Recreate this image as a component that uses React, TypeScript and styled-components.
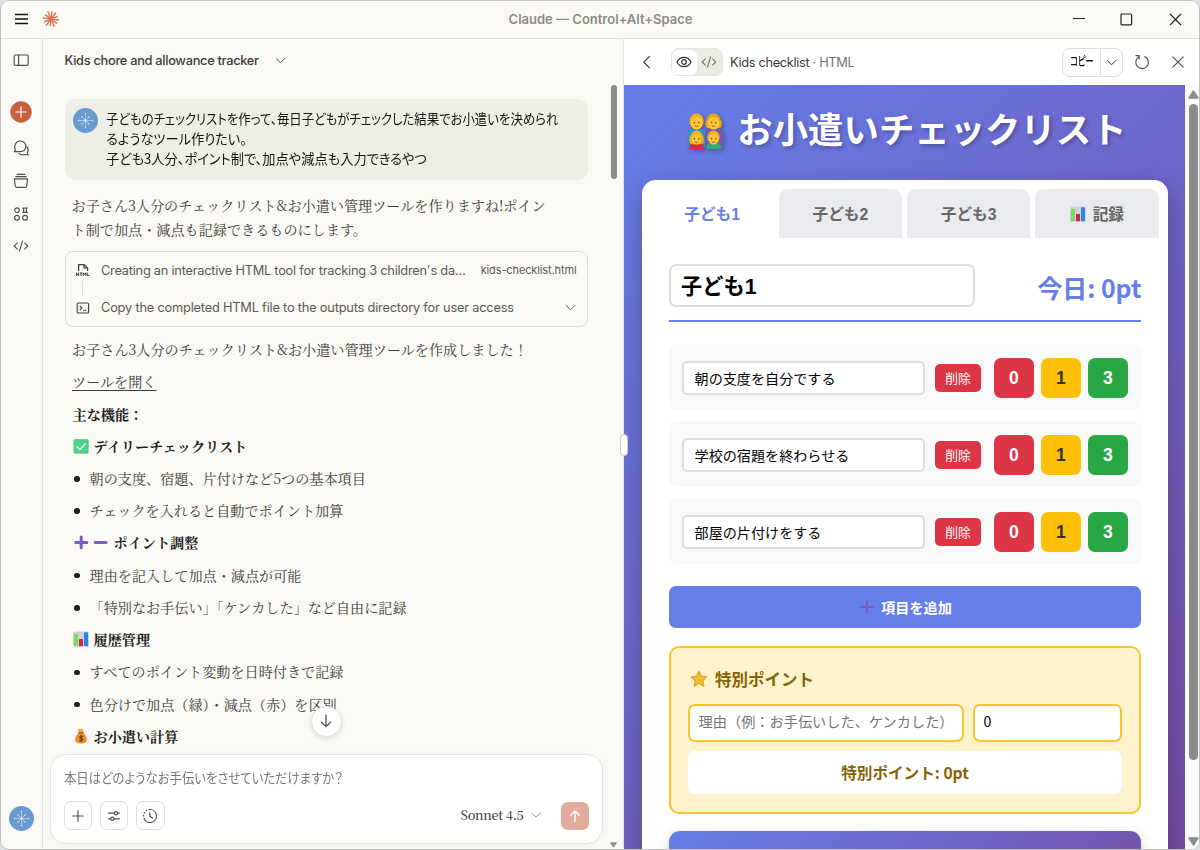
import React from 'react';
import styled, { createGlobalStyle, css } from 'styled-components';

const Global = createGlobalStyle`
  * { box-sizing: border-box; }
  html, body { margin: 0; padding: 0; background: #dfe1ea; }
  button, input { font: inherit; margin: 0; }
  svg { display: block; flex: none; }
`;

const sans = `Inter, "Noto Sans CJK JP", sans-serif`;
const jpSans = `"Noto Sans CJK JP", sans-serif`;
const mixedSans = `"Liberation Sans", "Noto Sans CJK JP", sans-serif`;
const serif = `"Noto Serif CJK JP", "Noto Serif JP", "Noto Sans CJK JP", serif`;

/* ---------- window ---------- */

const Window = styled.div`
  width: 1200px;
  height: 850px;
  display: flex;
  flex-direction: column;
  border: 1px solid #c2c1be;
  border-radius: 9px;
  overflow: hidden;
  background: #faf9f5;
  font-family: ${sans};
  color: #3d3d3a;
`;

const TitleBar = styled.header`
  height: 38px;
  flex: none;
  display: grid;
  grid-template-columns: 1fr auto 1fr;
  align-items: center;
  border-bottom: 1px solid #dfded9;
`;

const TitleLeft = styled.div`
  display: flex;
  align-items: center;
  gap: 13px;
  padding: 0 0 1px 13px;
`;

const TitleText = styled.div`
  padding: 0 0 2px 1px;
  font-size: 13px;
  font-weight: 600;
  color: #8c8b87;
`;

const TitleButtons = styled.div`
  display: flex;
  justify-content: flex-end;
  align-items: center;
  gap: 35.5px;
  padding: 0 17.5px 1px 0;
`;

const Body = styled.div`
  flex: 1;
  min-height: 0;
  display: flex;
`;

const Sidebar = styled.nav`
  width: 42px;
  flex: none;
  display: flex;
  flex-direction: column;
  align-items: center;
  padding: 13px 1px 18px 0;
  border-right: 1px solid #e3e2dd;
`;

const SideItem = styled.div<{ $top: number }>`
  width: 22px;
  height: 16px;
  margin-top: ${(p) => p.$top}px;
  display: flex;
  align-items: center;
  justify-content: center;
`;

const Avatar = styled.div`
  width: 25px;
  height: 25px;
  flex: none;
  border-radius: 50%;
  background: #6899cf;
  display: flex;
  align-items: center;
  justify-content: center;
`;

const Spacer = styled.div`
  flex: 1;
`;

/* ---------- chat ---------- */

const Chat = styled.section`
  width: 581px;
  flex: none;
  display: flex;
  flex-direction: column;
  border-right: 1px solid #e3e2dd;
  position: relative;
`;

const ChatHeader = styled.div`
  height: 43px;
  flex: none;
  display: flex;
  align-items: center;
  gap: 15px;
  padding: 0 0 1px 21.5px;
  font-size: 12.8px;
  font-weight: 500;
  letter-spacing: -0.29px;
`;

const ChatBody = styled.div`
  flex: 1;
  min-height: 0;
  display: flex;
`;

const ChatMain = styled.div`
  width: 560px;
  flex: none;
  display: flex;
  flex-direction: column;
`;

const Messages = styled.div`
  height: 672px;
  flex: none;
  overflow: hidden;
  padding: 17px 15.5px 0 21.5px;
`;

const Bubble = styled.div`
  height: 81px;
  border-radius: 10px;
  background: #efeee6;
  display: flex;
  gap: 8px;
  padding: 9px 8px;
`;

const BubbleLines = styled.div`
  flex: 1;
  min-width: 0;
`;

const BubbleText = styled.p<{ $fit: number }>`
  margin: 0;
  width: max-content;
  font-family: ${jpSans};
  font-size: 14px;
  line-height: 20px;
  color: #141413;
  white-space: nowrap;
  font-feature-settings: 'palt';
  transform: scaleX(${(p) => p.$fit});
  transform-origin: left;
`;

const Line = styled.p`
  margin: 0;
  padding-left: 7px;
  font-family: ${serif};
  font-size: 14.14px;
  line-height: 24px;
  white-space: nowrap;
  color: #3d3d3a;
`;

const Reply = styled.div`
  padding: 12.5px 0 10.5px;
`;

const ToolCard = styled.div`
  height: 76px;
  border: 1px solid #dddcd6;
  border-radius: 8px;
  display: flex;
  flex-direction: column;
  justify-content: space-between;
  padding: 8.5px 10px 9px 10.5px;
`;

const ToolRow = styled.div`
  height: 19px;
  display: flex;
  align-items: center;
  gap: 11px;
  font-size: 12.8px;
  color: #5a5955;
  white-space: nowrap;
`;

const ToolLabel = styled.span<{ $ls: number }>`
  flex: 1;
  min-width: 0;
  letter-spacing: ${(p) => p.$ls}px;
`;

const ToolFile = styled.span`
  font-size: 11px;
  letter-spacing: -0.12px;
`;

const ToolLink = styled.div`
  width: 1px;
  height: 15px;
  margin-left: 6px;
  background: #dddcd6;
`;

const List = styled.div`
  padding-top: 6px;
`;

const Row = styled.div<{ $kind?: 'head' | 'item' | 'link' }>`
  height: 32.23px;
  padding-left: 7.5px;
  display: flex;
  align-items: center;
  gap: 5px;
  font-family: ${serif};
  font-size: 14.14px;
  white-space: nowrap;
  ${(p) =>
    p.$kind === 'head' &&
    css`
      padding-left: 8px;
      font-weight: 700;
      color: #1f1e1d;
    `}
  ${(p) =>
    p.$kind === 'item' &&
    css`
      gap: 10px;
      padding-left: 9.5px;
      &::before {
        content: '';
        width: 5.5px;
        height: 5.5px;
        margin-top: 2px;
        border-radius: 50%;
        background: #1f1e1d;
      }
    `}
  ${(p) =>
    p.$kind === 'link' &&
    css`
      text-decoration: underline;
      text-decoration-thickness: 1px;
      text-underline-offset: 3px;
    `}
`;

const Composer = styled.div`
  width: 553px;
  height: 90px;
  margin-left: 6.5px;
  border: 1px solid #e5e4df;
  border-radius: 16px;
  background: #fff;
  box-shadow: 0 2px 8px rgba(0, 0, 0, 0.03);
  padding: 9.5px 13px 13px;
  display: flex;
  flex-direction: column;
  justify-content: space-between;
`;

const Placeholder = styled.div`
  width: max-content;
  font-family: ${jpSans};
  font-size: 14px;
  line-height: 24px;
  color: #7a7974;
  font-feature-settings: 'palt';
  white-space: nowrap;
  transform: scaleX(0.883);
  transform-origin: left;
`;

const Tools = styled.div`
  display: flex;
  align-items: center;
  gap: 7.5px;
`;

const ToolButton = styled.div`
  width: 28.7px;
  height: 28.7px;
  border: 1px solid #e0dfda;
  border-radius: 7px;
  display: flex;
  align-items: center;
  justify-content: center;
`;

const Model = styled.div`
  margin-left: auto;
  display: flex;
  align-items: center;
  gap: 6px;
  margin-right: 11.5px;
  padding-bottom: 1px;
  font-family: 'Noto Serif CJK JP', 'Liberation Serif', serif;
  font-size: 12.8px;
  font-weight: 500;
  letter-spacing: -0.3px;
  line-height: 20px;
  color: #3d3d3a;
`;

const Send = styled.div`
  width: 28px;
  height: 28px;
  border-radius: 7px;
  background: #e2ab9c;
  display: flex;
  align-items: center;
  justify-content: center;
`;

const ChatScroll = styled.div`
  flex: 1;
  display: flex;
  flex-direction: column;
  justify-content: space-between;
  align-items: center;
  padding: 3px 0 1px 1px;
`;

const ChatThumb = styled.div`
  width: 6px;
  height: 94px;
  border-radius: 3px;
  background: #8d8c89;
`;

const JumpDown = styled.div`
  position: absolute;
  left: 267.5px;
  top: 666.5px;
  width: 31px;
  height: 31px;
  border-radius: 50%;
  background: #fff;
  border: 1px solid #e6e5e0;
  box-shadow: 0 2px 5px rgba(0, 0, 0, 0.12);
  display: flex;
  align-items: center;
  justify-content: center;
`;

const SplitHandle = styled.div`
  position: absolute;
  z-index: 2;
  right: -5px;
  top: 395px;
  width: 8px;
  height: 22px;
  border-radius: 4px;
  background: #fff;
  border: 1px solid #cfcec9;
`;

/* ---------- artifact ---------- */

const Artifact = styled.section`
  flex: 1;
  min-width: 0;
  display: flex;
  flex-direction: column;
  background: #fff;
`;

const ArtifactBar = styled.div`
  height: 46px;
  flex: none;
  display: flex;
  align-items: center;
  padding: 0 13px 0 17px;
`;

const ViewToggle = styled.div`
  width: 52px;
  height: 28px;
  margin: 0 7.5px 0 18.5px;
  border-radius: 8px;
  background: #ecebe3;
  border: 1px solid #e6e5de;
  display: flex;
  align-items: center;
`;

const ViewOption = styled.div<{ $on?: boolean }>`
  width: 25px;
  height: 25px;
  border-radius: 6px;
  background: ${(p) => (p.$on ? '#fff' : 'transparent')};
  display: flex;
  align-items: center;
  justify-content: center;
`;

const ArtifactTitle = styled.div`
  flex: 1;
  font-size: 12.8px;
  letter-spacing: -0.33px;
  white-space: nowrap;
`;

const Muted = styled.span`
  color: #73726c;
`;

const CopyGroup = styled.div`
  width: 61px;
  height: 29px;
  display: flex;
  border: 1px solid #dfdeda;
  border-radius: 8px;
`;

const CopyLabel = styled.div`
  width: 38px;
  flex: none;
  border-right: 1px solid #dfdeda;
  display: flex;
  align-items: center;
  justify-content: center;
`;

const CopyText = styled.span`
  flex: none;
  font-family: ${jpSans};
  font-size: 12.5px;
  font-weight: 500;
  line-height: 24px;
  margin-bottom: 2px;
  color: #141413;
  font-feature-settings: 'palt';
  transform: scaleX(0.66);
  white-space: nowrap;
`;

const CopyMore = styled.div`
  flex: 1;
  display: flex;
  align-items: center;
  justify-content: center;
`;

const BarIcon = styled.div<{ $left: number }>`
  margin-left: ${(p) => p.$left}px;
`;

const Preview = styled.div`
  flex: 1;
  min-height: 0;
  display: flex;
`;

const Page = styled.div`
  width: 561px;
  flex: none;
  overflow: hidden;
  padding: 0 17px 0 18px;
  background: linear-gradient(135deg, #667eea 0%, #764ba2 100%);
  font-family: ${jpSans};
`;

const Heading = styled.h1`
  margin: 0;
  height: 95px;
  padding: 0 0 10px 4px;
  display: flex;
  align-items: center;
  justify-content: center;
  gap: 13px;
  font-size: 35.4px;
  font-weight: 700;
  color: #fff;
  white-space: nowrap;
  text-shadow: 2px 2px 4px rgba(0, 0, 0, 0.28);
`;

const FamilyMark = styled.span`
  margin-top: 8px;
  filter: drop-shadow(2px 2px 2px rgba(0, 0, 0, 0.28));
`;

const Card = styled.div`
  height: 760px;
  border-radius: 14px;
  background: #fff;
  box-shadow: 0 9px 26px rgba(0, 0, 0, 0.25);
  padding-top: 9px;
`;

const Tabs = styled.div`
  display: flex;
  gap: 5px;
  padding: 0 9.5px 0 8.5px;
`;

const Tab = styled.div<{ $on?: boolean }>`
  flex: 1;
  height: 49px;
  border-radius: 9px 9px 0 0;
  background: ${(p) => (p.$on ? '#fff' : '#e9ebee')};
  color: ${(p) => (p.$on ? '#667eea' : '#666')};
  display: flex;
  align-items: center;
  justify-content: center;
  gap: 7px;
  font-family: ${mixedSans};
  font-size: 15.7px;
  font-weight: 700;
`;

const Content = styled.div`
  padding: 26px 26.6px 0 26.6px;
`;

const ChildHeader = styled.div`
  display: flex;
  align-items: center;
  justify-content: space-between;
  padding-bottom: 13px;
  border-bottom: 2.6px solid #667eea;
`;

const NameField = styled.div`
  width: 306.5px;
  height: 42.5px;
  border: 2px solid #ddd;
  border-radius: 7px;
  padding-left: 10.5px;
  font-family: ${mixedSans};
  font-size: 21.2px;
  font-weight: 700;
  line-height: 41px;
  color: #000;
`;

const Today = styled.div`
  font-size: 24.9px;
  font-weight: 700;
  color: #667eea;
  line-height: 30px;
  padding-top: 3px;
`;

const Chores = styled.div`
  padding-top: 22.8px;
  display: flex;
  flex-direction: column;
  gap: 11.8px;
`;

const Chore = styled.div`
  height: 65.3px;
  border-radius: 8px;
  background: #f8f9fa;
  display: flex;
  align-items: center;
  padding: 2px 13.5px 0;
`;

const ChoreField = styled.div`
  width: 243px;
  height: 34.5px;
  border: 2px solid #ddd;
  border-radius: 5px;
  background: #fff;
  padding-left: 10.5px;
  font-size: 14.1px;
  line-height: 30.5px;
  color: #000;
`;

const Delete = styled.div`
  width: 46px;
  height: 28px;
  margin: 0 13px 0 10px;
  border-radius: 5px;
  background: #dc3545;
  color: #fff;
  font-size: 12.8px;
  line-height: 28px;
  text-align: center;
`;

const Scores = styled.div`
  display: flex;
  gap: 7px;
`;

const tones = {
  red: { bg: '#dc3545', fg: '#fff' },
  amber: { bg: '#ffc107', fg: '#333' },
  green: { bg: '#28a745', fg: '#fff' },
};

const Score = styled.div<{ $tone: keyof typeof tones }>`
  width: 40px;
  height: 40px;
  border-radius: 7px;
  background: ${(p) => tones[p.$tone].bg};
  color: ${(p) => tones[p.$tone].fg};
  font-family: ${mixedSans};
  font-size: 17.6px;
  font-weight: 700;
  line-height: 40px;
  text-align: center;
`;

const AddButton = styled.div`
  height: 42px;
  margin-top: 22.2px;
  border-radius: 7px;
  background: #667eea;
  color: #fff;
  font-size: 14.2px;
  font-weight: 700;
  display: flex;
  align-items: center;
  justify-content: center;
  gap: 7px;
  padding-left: 2px;
`;

const Special = styled.div`
  height: 168px;
  margin-top: 17.6px;
  border: 2px solid #fbc42c;
  border-radius: 10px;
  background: #fff3cd;
  padding: 17px 17.5px;
`;

const SpecialTitle = styled.div`
  height: 28px;
  display: flex;
  align-items: center;
  gap: 7px;
  padding-left: 2px;
  font-size: 16.5px;
  font-weight: 700;
  color: #856404;
`;

const SpecialFields = styled.div`
  display: flex;
  gap: 9px;
  margin: 11px 0 9px;
`;

const SpecialField = styled.div<{ $w: number; $dim?: boolean }>`
  width: ${(p) => p.$w}px;
  height: 38px;
  border: 2px solid #fbc42c;
  border-radius: 7px;
  background: #fff;
  padding-left: 8.5px;
  font-size: 14.2px;
  line-height: 31px;
  color: ${(p) => (p.$dim ? '#757575' : '#000')};
  white-space: nowrap;
`;

const SpecialTotal = styled.div`
  height: 43px;
  border-radius: 7px;
  background: #fff;
  color: #856404;
  font-size: 15.6px;
  font-weight: 700;
  line-height: 43px;
  text-align: center;
`;

const Summary = styled.div`
  height: 120px;
  margin-top: 17.8px;
  border-radius: 11px;
  background: linear-gradient(135deg, #667eea 0%, #764ba2 100%);
  box-shadow: 0 4px 14px rgba(0, 0, 0, 0.18);
`;

const PageScroll = styled.div`
  flex: 1;
  display: flex;
  flex-direction: column;
  align-items: center;
  padding: 5px 1px 3px 3px;
  background: #fcfcfc;
`;

const PageThumb = styled.div`
  width: 9px;
  height: 656px;
  margin: 5px 0 auto;
  border-radius: 5px;
  background: #8b8b8b;
`;

/* ---------- drawings ---------- */

type IconProps = { size?: number; w?: number; color?: string };

const Stroke = ({
  size = 16,
  w = 1.2,
  color = '#52514d',
  children,
}: IconProps & { children: React.ReactNode }) => (
  <svg
    width={size}
    height={size}
    viewBox="0 0 16 16"
    fill="none"
    stroke={color}
    strokeWidth={w}
    strokeLinecap="round"
    strokeLinejoin="round"
  >
    {children}
  </svg>
);

const Chevron = ({ size = 16, w = 1.2, color }: IconProps) => (
  <Stroke size={size} w={w} color={color}>
    <path d="M2.8 5.6 L8 10.8 L13.2 5.6" />
  </Stroke>
);

const CodeIcon = ({ color }: IconProps) => (
  <Stroke color={color} w={1.1}>
    <path d="M4.3 4.8 L1.2 8 L4.3 11.2 M11.7 4.8 L14.8 8 L11.7 11.2 M9.6 3 L6.4 13" />
  </Stroke>
);

const Burst = () => {
  const rays = [7.6, 6.9, 7.8, 6.6, 7.7, 7, 7.7, 6.8, 7.8, 7, 7.5, 6.8];
  return (
    <svg width="18" height="18" viewBox="0 0 18 18" stroke="#d97757" strokeWidth="1.5" strokeLinecap="round">
      {rays.map((r, i) => {
        const a = (i * Math.PI) / 6 + 0.12;
        return <line key={i} x1="9" y1="9" x2={9 + r * Math.cos(a)} y2={9 + r * Math.sin(a)} />;
      })}
    </svg>
  );
};

const Snow = () => (
  <svg width="17" height="17" viewBox="0 0 17 17" stroke="#c3d8ee" strokeWidth="0.7" fill="#d3e3f4">
    {[0, 45, 90, 135, 180, 225, 270, 315].map((a, i) => {
      const r = i % 2 ? 5 : 7;
      return (
        <g key={a} transform={`rotate(${a} 8.5 8.5)`}>
          <line x1="8.5" y1="8.5" x2={8.5 + r} y2="8.5" />
          <circle cx={8.5 + r} cy="8.5" r="0.8" stroke="none" />
        </g>
      );
    })}
    <circle cx="8.5" cy="8.5" r="1.4" stroke="none" />
  </svg>
);

const Chart = ({ size = 15 }: IconProps) => (
  <svg width={size} height={size} viewBox="0 0 16 16">
    <rect x="0" y="0.5" width="16" height="15" rx="1.5" fill="#d3d0dc" />
    <rect x="1" y="3" width="4" height="12.3" rx="0.6" fill="#7fd957" />
    <rect x="6" y="8" width="4" height="7.3" rx="0.6" fill="#c7264f" />
    <rect x="11" y="1.2" width="4" height="14.1" rx="0.6" fill="#2b86dc" />
  </svg>
);

const CheckMark = () => (
  <svg width="16" height="16" viewBox="0 0 16 16">
    <rect x="1" y="1.6" width="14.2" height="13.6" rx="1" fill="#4fd08b" stroke="#35b974" strokeWidth="0.6" />
    <path d="M4 8.8 L7 11.6 L12.4 5.6" fill="none" stroke="#fff" strokeWidth="1.4" strokeLinecap="round" />
  </svg>
);

const PlusMinus = () => (
  <svg width="36" height="16" viewBox="0 0 36 16" stroke="#7a5cc4" strokeWidth="3" strokeLinecap="round">
    <path d="M2.6 8.4 H13.8 M8.2 3 V13.8 M22.2 8.4 H33" />
  </svg>
);

const Bag = () => (
  <svg width="16" height="16" viewBox="0 0 16 16">
    <path d="M6 4.6 L4.8 1.6 Q8 0 10.6 1.4 L9.8 4.6 Z" fill="#f3a83b" />
    <path d="M6 4.6 H10 C13 7.2 14.4 10 13.6 13 Q13 15.4 8.2 15.4 Q3 15.4 2.2 13 C1.5 10 3.2 7 6 4.6 Z" fill="#ee8f2a" />
    <rect x="5.2" y="4" width="5.6" height="1.5" rx="0.7" fill="#b55b1b" />
    <path
      d="M10 8.6 Q8 7.2 6.6 8.6 Q6.2 10 8.1 10.3 Q10.4 10.8 9.8 12.2 Q8.2 13.5 6.2 12.2 M8.2 7 V14"
      fill="none"
      stroke="#5f3413"
      strokeWidth="1"
    />
  </svg>
);

const Family = () => {
  const people = [
    { x: 9.6, y: 8.6, r: 6.8, hair: '#f2b01a', long: false },
    { x: 26.6, y: 8.6, r: 6.8, hair: '#f0a010', long: true },
    { x: 9.6, y: 24.6, r: 5.8, hair: '#f2b01a', long: true },
    { x: 26.6, y: 24.6, r: 5.8, hair: '#f0b21a', long: false },
  ];
  return (
    <svg width="37" height="38" viewBox="0 0 37 38">
      <rect x="1" y="16" width="17" height="20" rx="3.5" fill="#2f8fcb" />
      <rect x="18.6" y="16" width="17" height="20" rx="3.5" fill="#7d55b4" />
      <path d="M2.2 36 q0 -7 7.4 -7 q7.4 0 7.4 7 Z" fill="#cf2f3c" />
      <path d="M19.2 36 q0 -7 7.4 -7 q7.4 0 7.4 7 Z" fill="#2fae73" />
      {people.map((p, i) => (
        <g key={i}>
          <ellipse cx={p.x} cy={p.y - 0.4} rx={p.r + 0.3} ry={p.r + 0.9} fill={p.hair} />
          {p.long && <rect x={p.x - p.r - 1.4} y={p.y - 2.4} width={p.r * 2 + 2.8} height="9" rx="3.4" fill={p.hair} />}
          <ellipse cx={p.x} cy={p.y + 1.6} rx={p.r - 1} ry={p.r - 0.4} fill="#ffc935" />
          <circle cx={p.x - 2.2} cy={p.y + 1} r="0.8" fill="#6b451c" />
          <circle cx={p.x + 2.2} cy={p.y + 1} r="0.8" fill="#6b451c" />
          <path d={`M${p.x - 1.8} ${p.y + 4.2} q1.8 1.3 3.6 0`} stroke="#c4462b" strokeWidth="1" fill="none" />
        </g>
      ))}
    </svg>
  );
};

const Star = () => (
  <svg width="18" height="18" viewBox="0 0 18 18">
    <path
      d="M9 1.4 L11.3 6.3 L16.6 7 L12.7 10.7 L13.8 16.2 L9 13.5 L4.2 16.2 L5.3 10.7 L1.4 7 L6.7 6.3 Z"
      fill="#eebf35"
      stroke="#dfac2e"
      strokeWidth="1.4"
      strokeLinejoin="round"
    />
  </svg>
);

const Triangle = ({ down, w = 11, h = 9 }: { down?: boolean; w?: number; h?: number }) => (
  <svg width={w} height={h} viewBox="0 0 11 9">
    <path
      d={down ? 'M1 1 H10 L5.5 8 Z' : 'M1 8 H10 L5.5 1 Z'}
      fill="#8b8b8b"
      stroke="#8b8b8b"
      strokeWidth="1.4"
      strokeLinejoin="round"
    />
  </svg>
);

const chores = ['朝の支度を自分でする', '学校の宿題を終わらせる', '部屋の片付けをする'];

export default function App() {
  return (
    <>
      <Global />
      <Window>
        <TitleBar>
          <TitleLeft>
            <svg width="15" height="12" viewBox="0 0 15 12" stroke="#111" strokeWidth="1.7">
              <path d="M1 1.5 H14 M1 6 H14 M1 10.5 H14" />
            </svg>
            <Burst />
          </TitleLeft>
          <TitleText>Claude — Control+Alt+Space</TitleText>
          <TitleButtons>
            <svg width="12" height="12" viewBox="0 0 12 12" stroke="#222" strokeWidth="1">
              <path d="M0 5.5 H12" />
            </svg>
            <svg width="13" height="13" viewBox="0 0 13 13" stroke="#222" strokeWidth="1.2" fill="none">
              <rect x="1" y="1" width="10.6" height="10.8" rx="1" />
            </svg>
            <svg width="13" height="13" viewBox="0 0 13 13" stroke="#222" strokeWidth="1.2">
              <path d="M1 1 L12 12 M12 1 L1 12" />
            </svg>
          </TitleButtons>
        </TitleBar>
        <Body>
          <Sidebar>
            <SideItem $top={0}>
              <Stroke>
                <rect x="1.2" y="3" width="14" height="10.4" rx="1.4" />
                <path d="M5.6 3 V13.4" />
              </Stroke>
            </SideItem>
            <SideItem $top={36}>
              <svg width="22" height="22" viewBox="0 0 22 22">
                <circle cx="11" cy="11" r="10.7" fill="#c6613f" />
                <path d="M11 6 V16 M6 11 H16" stroke="#fff" strokeWidth="1.2" strokeLinecap="round" />
              </svg>
            </SideItem>
            <SideItem $top={20}>
              <Stroke>
                <path d="M2.4 10 C0.4 5.4 3 1 7.2 1 C11.2 1 13.2 4 12.8 7 C12.4 10.2 10 11.6 7.2 11.6 H1.2 Z" />
                <path d="M6 13.4 C8 15 10.6 14.9 12 14.5 L15.2 15 L14.2 12.6 C15.6 10.6 15.2 8.4 14 7" />
              </Stroke>
            </SideItem>
            <SideItem $top={17}>
              <Stroke>
                <path d="M1.4 5.8 H14.6 L13.7 13 Q13.5 14.4 12.2 14.4 H3.8 Q2.5 14.4 2.3 13 Z M2.8 3.6 H13.2 M4.2 1.4 H11.8" />
              </Stroke>
            </SideItem>
            <SideItem $top={17}>
              <Stroke>
                <circle cx="4" cy="4.2" r="2.3" />
                <circle cx="4" cy="11.8" r="2.4" />
                <circle cx="12" cy="11.8" r="2.4" />
                <path d="M9.6 2 H14.4 M9.6 6.4 H14.4 M10.6 2 V6.4 M13.4 2 V6.4" />
              </Stroke>
            </SideItem>
            <SideItem $top={16}>
              <CodeIcon />
            </SideItem>
            <Spacer />
            <Avatar>
              <Snow />
            </Avatar>
          </Sidebar>

          <Chat>
            <ChatHeader>
              Kids chore and allowance tracker
              <Chevron size={13} />
            </ChatHeader>
            <ChatBody>
              <ChatMain>
                <Messages>
                  <Bubble>
                    <Avatar>
                      <Snow />
                    </Avatar>
                    <BubbleLines>
                      <BubbleText $fit={0.886}>
                        子どものチェックリストを作って、毎日子どもがチェックした結果でお小遣いを決められ
                      </BubbleText>
                      <BubbleText $fit={0.945}>るようなツール作りたい。</BubbleText>
                      <BubbleText $fit={0.945}>子ども3人分、ポイント制で、加点や減点も入力できるやつ</BubbleText>
                    </BubbleLines>
                  </Bubble>
                  <Reply>
                    <Line>お子さん3人分のチェックリスト&amp;お小遣い管理ツールを作りますね!ポイン</Line>
                    <Line>ト制で加点・減点も記録できるものにします。</Line>
                  </Reply>
                  <ToolCard>
                    <ToolRow>
                      <svg width="14" height="14" viewBox="0 0 14 14" fill="none" stroke="#3d3d3a" strokeWidth="1.2">
                        <path d="M2.6 8 V1.6 H8 L11.6 5 V8 M8 1.6 V5 H11.6" />
                        <path
                          d="M0.6 9.6 V13 M2.6 9.6 V13 M0.6 11.3 H2.6 M3.8 10 H6.2 M5 10 V13 M7.2 13 V9.8 L8.5 11.6 L9.8 9.8 V13 M11.2 9.6 V12.6 H13.4"
                          strokeWidth="1"
                        />
                      </svg>
                      <ToolLabel $ls={-0.24}>Creating an interactive HTML tool for tracking 3 children's da…</ToolLabel>
                      <ToolFile>kids-checklist.html</ToolFile>
                    </ToolRow>
                    <ToolLink />
                    <ToolRow>
                      <svg width="14" height="14" viewBox="0 0 14 14" fill="none" stroke="#3d3d3a" strokeWidth="1.1">
                        <rect x="1.2" y="2" width="11.4" height="10" rx="1" />
                        <path d="M3.8 5 L6 7 L3.8 9 M7 9.2 H10" />
                      </svg>
                      <ToolLabel $ls={-0.2}>Copy the completed HTML file to the outputs directory for user access</ToolLabel>
                      <Chevron size={13} />
                    </ToolRow>
                  </ToolCard>
                  <List>
                    <Row>お子さん3人分のチェックリスト&amp;お小遣い管理ツールを作成しました！</Row>
                    <Row $kind="link">ツールを開く</Row>
                    <Row $kind="head">主な機能：</Row>
                    <Row $kind="head">
                      <CheckMark />
                      デイリーチェックリスト
                    </Row>
                    <Row $kind="item">朝の支度、宿題、片付けなど5つの基本項目</Row>
                    <Row $kind="item">チェックを入れると自動でポイント加算</Row>
                    <Row $kind="head">
                      <PlusMinus />
                      ポイント調整
                    </Row>
                    <Row $kind="item">理由を記入して加点・減点が可能</Row>
                    <Row $kind="item">「特別なお手伝い」「ケンカした」など自由に記録</Row>
                    <Row $kind="head">
                      <Chart size={16} />
                      履歴管理
                    </Row>
                    <Row $kind="item">すべてのポイント変動を日時付きで記録</Row>
                    <Row $kind="item">色分けで加点（緑）・減点（赤）を区別</Row>
                    <Row $kind="head">
                      <Bag />
                      お小遣い計算
                    </Row>
                  </List>
                </Messages>
                <Composer>
                  <Placeholder>本日はどのようなお手伝いをさせていただけますか？</Placeholder>
                  <Tools>
                    <ToolButton>
                      <Stroke>
                        <path d="M8 2.8 V13.2 M2.8 8 H13.2" />
                      </Stroke>
                    </ToolButton>
                    <ToolButton>
                      <Stroke>
                        <path d="M2.6 5.2 H8.2 M11.6 5.2 H13.4 M2.6 10.8 H4.6 M8 10.8 H13.4" />
                        <circle cx="9.9" cy="5.2" r="1.6" />
                        <circle cx="6.3" cy="10.8" r="1.6" />
                      </Stroke>
                    </ToolButton>
                    <ToolButton>
                      <Stroke>
                        <path d="M8 1.5 A6.5 6.5 0 1 1 2 10.6" />
                        <path d="M1.5 8 A6.5 6.5 0 0 1 8 1.5" strokeDasharray="0.6 2.4" />
                        <path d="M7.8 4.6 V8.2 L10.4 10" />
                      </Stroke>
                    </ToolButton>
                    <Model>
                      Sonnet 4.5
                      <Chevron size={12} color="#8c8b87" />
                    </Model>
                    <Send>
                      <Stroke color="#fff" w={1.4}>
                        <path d="M8 13.2 V3 M3.8 7.2 L8 3 L12.2 7.2" />
                      </Stroke>
                    </Send>
                  </Tools>
                </Composer>
              </ChatMain>
              <ChatScroll>
                <ChatThumb />
                <Triangle down w={7} h={6} />
              </ChatScroll>
            </ChatBody>
            <JumpDown>
              <Stroke w={1.3}>
                <path d="M8 2 V13.6 M3.4 9.2 L8 13.6 L12.6 9.2" />
              </Stroke>
            </JumpDown>
            <SplitHandle />
          </Chat>

          <Artifact>
            <ArtifactBar>
              <svg width="11" height="16" viewBox="0 0 11 16" fill="none" stroke="#3d3d3a" strokeWidth="1.2">
                <path d="M8.8 2.2 L2.8 8.2 L8.8 14.2" />
              </svg>
              <ViewToggle>
                <ViewOption $on>
                  <Stroke color="#2b2a28">
                    <path d="M1 8 C3.8 1.8 12.2 1.8 15 8 C12.2 14.2 3.8 14.2 1 8 Z" />
                    <circle cx="8" cy="8" r="2.3" />
                  </Stroke>
                </ViewOption>
                <ViewOption>
                  <CodeIcon color="#73726c" />
                </ViewOption>
              </ViewToggle>
              <ArtifactTitle>
                Kids checklist<Muted> · HTML</Muted>
              </ArtifactTitle>
              <CopyGroup>
                <CopyLabel>
                  <CopyText>コピー</CopyText>
                </CopyLabel>
                <CopyMore>
                  <Chevron size={13} color="#2b2a28" />
                </CopyMore>
              </CopyGroup>
              <BarIcon $left={11}>
                <Stroke w={1.2}>
                  <path d="M5 2.8 A6.3 6.3 0 1 0 10.8 2.6 M2 1.6 H5.2 V5" />
                </Stroke>
              </BarIcon>
              <BarIcon $left={20}>
                <Stroke w={1.2}>
                  <path d="M2.8 2.8 L13.2 13.2 M13.2 2.8 L2.8 13.2" />
                </Stroke>
              </BarIcon>
            </ArtifactBar>
            <Preview>
              <Page>
                <Heading>
                  <FamilyMark>
                    <Family />
                  </FamilyMark>
                  お小遣いチェックリスト
                </Heading>
                <Card>
                  <Tabs>
                    <Tab $on>子ども1</Tab>
                    <Tab>子ども2</Tab>
                    <Tab>子ども3</Tab>
                    <Tab>
                      <Chart size={16} />
                      記録
                    </Tab>
                  </Tabs>
                  <Content>
                    <ChildHeader>
                      <NameField>子ども1</NameField>
                      <Today>今日: 0pt</Today>
                    </ChildHeader>
                    <Chores>
                      {chores.map((name) => (
                        <Chore key={name}>
                          <ChoreField>{name}</ChoreField>
                          <Delete>削除</Delete>
                          <Scores>
                            <Score $tone="red">0</Score>
                            <Score $tone="amber">1</Score>
                            <Score $tone="green">3</Score>
                          </Scores>
                        </Chore>
                      ))}
                    </Chores>
                    <AddButton>
                      <svg width="14" height="14" viewBox="0 0 14 14" stroke="#7a58bd" strokeWidth="1.8">
                        <path d="M7 0.5 V13.5 M0.5 7 H13.5" />
                      </svg>
                      項目を追加
                    </AddButton>
                    <Special>
                      <SpecialTitle>
                        <Star />
                        特別ポイント
                      </SpecialTitle>
                      <SpecialFields>
                        <SpecialField $w={276} $dim>
                          理由（例：お手伝いした、ケンカした）
                        </SpecialField>
                        <SpecialField $w={149}>0</SpecialField>
                      </SpecialFields>
                      <SpecialTotal>特別ポイント: 0pt</SpecialTotal>
                    </Special>
                    <Summary />
                  </Content>
                </Card>
              </Page>
              <PageScroll>
                <Triangle />
                <PageThumb />
                <Triangle down />
              </PageScroll>
            </Preview>
          </Artifact>
        </Body>
      </Window>
    </>
  );
}
